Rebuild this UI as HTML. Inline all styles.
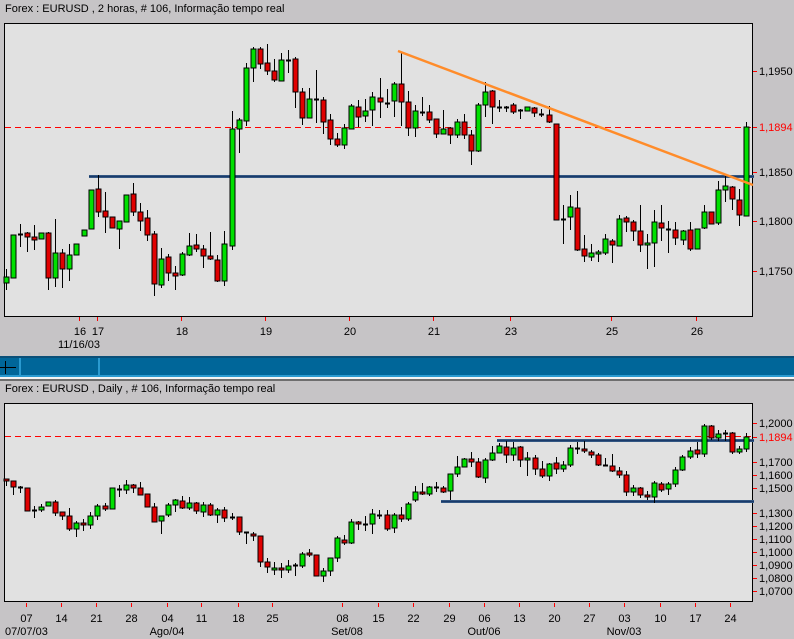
<!DOCTYPE html>
<html><head><meta charset="utf-8"><style>
html,body{margin:0;padding:0;background:#c6c4c6;width:794px;height:639px;overflow:hidden}
svg{display:block}
text{font-family:"Liberation Sans",sans-serif;font-size:11px}
</style></head><body>
<svg id="s" width="794" height="639" xmlns="http://www.w3.org/2000/svg">
<rect width="794" height="639" fill="#c6c4c6"/>
<text x="5" y="12" fill="#000">Forex : EURUSD , 2 horas, # 106, Informação tempo real</text>
<rect x="4.5" y="23.5" width="748" height="293" fill="#e1e1e1" stroke="#000"/>
<text x="5" y="392" fill="#000">Forex : EURUSD , Daily , # 106, Informação tempo real</text>
<rect x="4.5" y="403.5" width="748" height="198" fill="#e1e1e1" stroke="#000"/>
<rect x="0" y="356" width="794" height="21" fill="#006699"/>
<rect x="0" y="356" width="794" height="2" fill="#0a4f78"/>
<rect x="0" y="375" width="794" height="2" fill="#2a9ad0"/>
<rect x="19" y="358" width="2" height="17" fill="#2a9ad0"/>
<rect x="98" y="358" width="2" height="17" fill="#2a9ad0"/>
<line x1="0" y1="367.5" x2="16" y2="367.5" stroke="#000"/>
<line x1="5.5" y1="361" x2="5.5" y2="374" stroke="#000"/>
<rect x="0" y="377" width="794" height="2" fill="#f4f4f4"/>
<rect x="0" y="379" width="794" height="2" fill="#6e6e6e"/>
<g id="g"></g>
</svg>
<script>
var g=document.getElementById('g'),h='';
function T(x,y,t,c,a){h+='<text x="'+x+'" y="'+y+'" fill="'+(c||'#000')+'"'+(a?' text-anchor="'+a+'"':'')+'>'+t+'</text>';}
function L(x1,y1,x2,y2,c,w,d){h+='<line x1="'+x1+'" y1="'+y1+'" x2="'+x2+'" y2="'+y2+'" stroke="'+c+'" stroke-width="'+(w||1)+'"'+(d?' stroke-dasharray="'+d+'"':'')+'/>';}
function C(a){for(var i=0;i<a.length;i++){var c=a[i],x=c[0],t=c[1],b=c[2],wt=c[3]!=null?c[3]:t,wb=c[4]!=null?c[4]:b,col=c[5];
L(x+.5,wt,x+.5,wb,'#000');
if(b-t<2){L(x-2,t+.5,x+3,t+.5,'#000',2);}
else h+='<rect x="'+(x-2)+'" y="'+t+'" width="5" height="'+(b-t)+'" fill="'+(col?'#00e000':'#e00000')+'" stroke="#000"/>';}}
L(5,127.5,752,127.5,'#f00',1,'6,4');
L(89,176.5,754,176.5,'#3a5f8a',3);L(89,176.5,754,176.5,'#1a3a6a',1.5);
var tp=[[6,277,283,269,290,1],[13,235,278,null,null,1],[20,234,234,224,247],[27,233,237,232,252,0],[34,237,240,225,250,0],[41,233,239,null,null,1],[48,233,278,232,290,0],[55,253,278,219,287,1],[62,253,269,249,288,0],[69,255,269,244,281,1],[76,244,255,null,null,1],[84,230,236,null,null,1],[91,190,229,null,null,1],[98,189,212,175,217,0],[105,211,217,192,233,0],[112,217,228,null,null,0],[119,221,229,null,249,1],[126,195,222,null,null,1],[133,194,212,183,216,0],[140,212,221,203,231,0],[147,218,235,210,241,0],[154,234,284,231,296,0],[161,259,285,248,288,1],[168,257,273,254,281,0],[175,273,276,266,290,0],[182,254,275,252,276,1],[189,246,255,233,256,1],[196,245,249,234,252,0],[203,249,256,245,268,0],[210,256,259,232,260,0],[217,260,281,255,282,0],[224,244,281,231,286,1],[232,129,246,111,250,1],[239,120,129,118,153,1],[246,68,121,63,126,1],[253,49,68,47,82,1],[260,49,64,47,69,0],[267,63,71,44,75,0],[274,71,80,59,82,0],[281,60,81,53,81,1],[288,60,60,50,73],[295,59,92,57,108,0],[302,92,118,88,125,0],[309,99,118,88,118,1],[316,99,99,70,123],[323,100,122,97,134,0],[330,120,139,114,145,0],[337,139,145,133,147,0],[344,128,145,124,149,1],[351,106,129,104,129,1],[358,107,117,100,127,0],[365,111,116,99,122,1],[372,97,110,92,126,1],[380,98,102,78,118,0],[387,103,103,89,108],[394,84,101,82,117,1],[401,84,102,52,126,0],[408,102,128,91,136,0],[415,111,128,105,137,1],[422,112,112,97,116],[429,112,120,105,123,0],[436,119,134,119,138,0],[443,129,134,110,134,1],[450,128,135,127,144,0],[457,122,135,119,138,1],[464,122,135,114,139,0],[471,135,151,130,165,0],[478,105,151,103,152,1],[485,92,105,82,117,1],[492,91,107,90,124,0],[499,107,107,100,112],[506,107,107,106,112],[513,105,112,103,114,0],[520,110,110,109,119],[527,107,111,null,null,1],[534,108,113,107,117,0],[541,114,114,109,117],[549,115,122,106,123,0],[556,124,220,null,null,0],[563,219,219,205,244],[570,207,217,195,230,1],[577,208,250,191,251,0],[584,249,256,235,262,0],[591,253,257,244,261,1],[598,252,254,250,262,1],[605,239,253,234,255,1],[612,241,245,239,263,0],[619,219,246,215,246,1],[626,218,222,216,232,0],[633,222,231,220,241,0],[640,231,245,205,252,0],[647,243,245,234,269,1],[654,222,243,210,267,1],[661,223,228,205,241,0],[668,229,229,221,253],[675,230,238,222,245,0],[683,231,240,230,245,1],[690,230,249,222,251,0],[697,229,249,null,null,1],[704,212,228,205,229,1],[711,212,224,null,null,0],[718,190,223,181,225,1],[725,186,190,176,202,1],[732,187,199,186,210,0],[739,200,215,189,226,0],[746,127,216,122,216,1]];
C(tp);
L(398,51,753,185,'#ff8c2a',2.5);
[[71,'1,1950'],[127,'1,1894',1],[172,'1,1850'],[221,'1,1800'],[271,'1,1750']].forEach(function(a){L(753,a[0]+.5,757,a[0]+.5,'#f00');T(759,a[0]+4,a[1],a[2]?'#f00':'#000');});
[[79,'16'],[97,'17'],[181,'18'],[265,'19'],[349,'20'],[433,'21'],[510,'23'],[611,'25'],[696,'26']].forEach(function(a){L(a[0]+.5,317,a[0]+.5,321,'#f00');T(a[0]+1,335,a[1],0,'middle');});
T(79,348,'11/16/03',0,'middle');
L(5,436.5,752,436.5,'#f00',1,'6,4');
L(497,440.5,754,440.5,'#3a5f8a',3);L(497,440.5,754,440.5,'#1a3a6a',1.5);
L(441,501.5,754,501.5,'#3a5f8a',3);L(441,501.5,754,501.5,'#1a3a6a',1.5);
var bt=[[6,479,481,479,486,0],[13,481,487,481,495,0],[20,487,487,486,493],[27,488,511,null,null,0],[34,510,510,506,518],[41,507,510,504,512,1],[48,502,506,null,null,1],[55,502,513,500,516,0],[62,512,516,512,520,0],[69,516,529,508,531,0],[76,523,529,521,537,1],[83,523,525,519,531,0],[90,516,525,512,529,1],[97,506,516,504,520,1],[105,506,509,503,511,0],[112,488,509,null,null,1],[119,489,489,485,497],[126,485,490,480,494,1],[133,485,488,484,493,0],[140,488,495,482,495,0],[147,494,507,null,null,0],[154,507,522,503,522,0],[161,516,521,516,534,1],[168,505,515,503,517,1],[175,500,505,499,512,1],[182,501,508,496,509,0],[189,503,508,497,510,1],[196,503,511,502,514,0],[203,505,512,502,517,1],[210,505,515,503,516,0],[217,510,515,508,523,1],[224,510,518,507,522,0],[232,517,517,513,520],[239,517,532,517,535,0],[246,532,532,532,544],[253,534,536,532,541,0],[260,536,562,536,567,0],[267,562,567,558,573,0],[274,568,570,562,575,1],[281,568,570,563,578,0],[288,566,570,560,573,1],[295,565,565,563,576],[302,554,566,552,568,1],[309,553,555,549,557,0],[316,555,576,null,null,0],[323,571,576,568,582,1],[330,558,571,558,576,1],[337,538,558,536,562,1],[344,540,543,535,545,0],[351,522,543,519,544,1],[358,522,524,521,530,0],[365,524,524,516,531],[372,514,524,509,534,1],[379,515,515,510,519],[387,515,529,510,531,0],[394,515,528,513,533,1],[401,515,519,507,522,0],[408,504,519,502,521,1],[415,492,500,486,502,1],[422,492,494,483,495,0],[429,487,494,486,496,1],[436,487,487,482,492],[443,488,492,486,493,0],[450,474,491,474,500,1],[457,467,474,456,477,1],[464,459,467,458,467,1],[471,459,462,452,467,0],[478,462,477,458,478,0],[485,460,478,458,483,1],[492,453,460,446,461,1],[499,446,453,443,453,1],[506,447,455,441,463,0],[513,448,455,442,461,1],[520,447,460,446,467,0],[527,458,460,452,476,1],[535,458,469,455,475,0],[542,469,476,461,478,0],[549,464,476,463,481,1],[556,463,469,457,474,0],[563,465,469,461,472,1],[570,448,465,445,467,1],[577,448,448,442,454],[584,449,451,441,453,0],[591,452,455,450,458,0],[598,455,465,453,466,0],[605,465,465,458,466],[612,466,471,454,472,0],[619,471,475,467,478,0],[626,475,492,471,496,0],[633,488,492,485,496,1],[640,488,495,487,498,0],[647,495,497,491,500,0],[654,483,497,481,503,1],[661,484,490,482,492,0],[668,484,489,482,495,1],[675,470,484,467,487,1],[682,457,470,455,471,1],[690,451,457,447,459,1],[697,450,454,442,458,0],[704,426,454,424,457,1],[711,426,438,425,440,0],[718,434,438,430,441,1],[725,433,433,430,441],[732,433,452,432,454,0],[739,449,452,446,454,1],[746,437,449,433,452,1]];
C(bt);
[[423,'1,2000'],[437,'1,1894',1],[462,'1,1700'],[475,'1,1600'],[488,'1,1500'],[513,'1,1300'],[526,'1,1200'],[539,'1,1100'],[552,'1,1000'],[565,'1,0900'],[578,'1,0800'],[591,'1,0700']].forEach(function(a){L(753,a[0]+.5,757,a[0]+.5,'#f00');T(759,a[0]+4,a[1],a[2]?'#f00':'#000');});
[[26,'07'],[61,'14'],[96,'21'],[131,'28'],[167,'04'],[201,'11'],[238,'18'],[272,'25'],[342,'08'],[378,'15'],[413,'22'],[449,'29'],[484,'06'],[519,'13'],[554,'20'],[589,'27'],[624,'03'],[660,'10'],[695,'17'],[730,'24']].forEach(function(a){L(a[0]+.5,603,a[0]+.5,607,'#f00');T(a[0]+.5,622,a[1],0,'middle');});
T(5,635,'07/07/03');T(167,635,'Ago/04',0,'middle');T(347,635,'Set/08',0,'middle');T(484,635,'Out/06',0,'middle');T(624,635,'Nov/03',0,'middle');
g.innerHTML=h;
</script>
</body></html>
